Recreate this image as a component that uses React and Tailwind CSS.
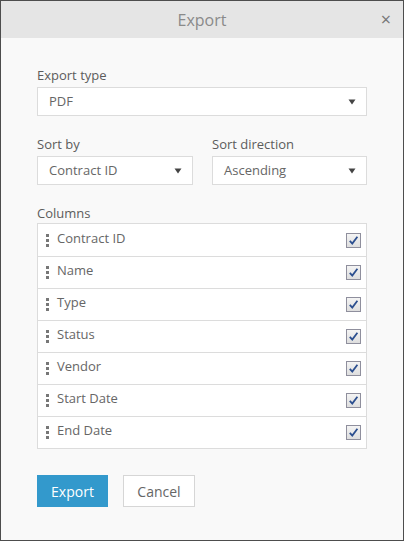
import React, { useState } from 'react';

const columns = ['Contract ID', 'Name', 'Type', 'Status', 'Vendor', 'Start Date', 'End Date'];

const Caret = () => (
  <svg width="8" height="6" viewBox="0 0 8 6" className="shrink-0">
    <path d="M0.5 0.5 L7.5 0.5 L4 5.5 Z" fill="#444" />
  </svg>
);

const Select = ({ value, className = '' }) => (
  <div className={`h-[29px] bg-white border border-[#dcdcdc] flex items-center justify-between pl-[11px] pr-[10px] text-[#666] ${className}`}>
    <span>{value}</span>
    <Caret />
  </div>
);

const Handle = () => (
  <div className="flex flex-col gap-[2px] w-[3px] mr-[8px]">
    <span className="w-[3px] h-[3px] bg-[#777]" />
    <span className="w-[3px] h-[3px] bg-[#777]" />
    <span className="w-[3px] h-[3px] bg-[#777]" />
  </div>
);

const Check = ({ checked, onClick }) => (
  <button
    onClick={onClick}
    className="w-[15px] h-[15px] border border-[#8f8f9d] bg-gradient-to-b from-[#f4f4f4] to-[#dedede] flex items-center justify-center"
  >
    {checked && (
      <svg width="11" height="11" viewBox="0 0 11 11">
        <path d="M1.8 5.8 L4.3 8.6 L9.4 1.8" fill="none" stroke="#2c4f8f" strokeWidth="1.8" />
      </svg>
    )}
  </button>
);

export default function App() {
  const [checked, setChecked] = useState(columns.map(() => true));

  return (
    <div className="w-[404px] h-[541px] border border-[#4d4d4d] bg-[#f9f9f9] flex flex-col text-[13px] text-[#5c5c5c]" style={{ fontFamily: '"Open Sans", "Noto Sans", sans-serif' }}>
      {/* Title bar */}
      <div className="h-[37px] shrink-0 bg-[#e5e5e5] relative flex items-center justify-center">
        <span className="text-[16px] text-[#8a8a8a]">Export</span>
        <span className="absolute right-[12px] top-[9px] text-[#777] text-[18px] leading-none">×</span>
      </div>

      <div className="px-[36px] pt-[29px] flex flex-col">
        <label className="leading-[16px] mb-[4px]">Export type</label>
        <Select value="PDF" />

        <div className="flex gap-[19px] mt-[20px]">
          <div className="flex flex-col w-[156px]">
            <label className="leading-[16px] mb-[4px]">Sort by</label>
            <Select value="Contract ID" />
          </div>
          <div className="flex flex-col flex-1">
            <label className="leading-[16px] mb-[4px]">Sort direction</label>
            <Select value="Ascending" />
          </div>
        </div>

        <label className="leading-[16px] mt-[20px] mb-[2px]">Columns</label>
        <div className="border border-[#dcdcdc] bg-white">
          {columns.map((c, i) => (
            <div key={c} className={`h-[32px] flex items-center pl-[8px] pr-[5px] ${i > 0 ? 'border-t border-[#dcdcdc]' : ''}`}>
              <Handle />
              <span className="flex-1 -mt-[3px] text-[#666]">{c}</span>
              <Check checked={checked[i]} onClick={() => setChecked(checked.map((v, j) => (j === i ? !v : v)))} />
            </div>
          ))}
        </div>

        <div className="flex gap-[15px] mt-[26px]">
          <button className="w-[71px] h-[32px] bg-[#3399cc] text-white text-[14px]">Export</button>
          <button className="w-[72px] h-[32px] bg-white border border-[#d6d6d6] text-[#666] text-[14px]">Cancel</button>
        </div>
      </div>
    </div>
  );
}
